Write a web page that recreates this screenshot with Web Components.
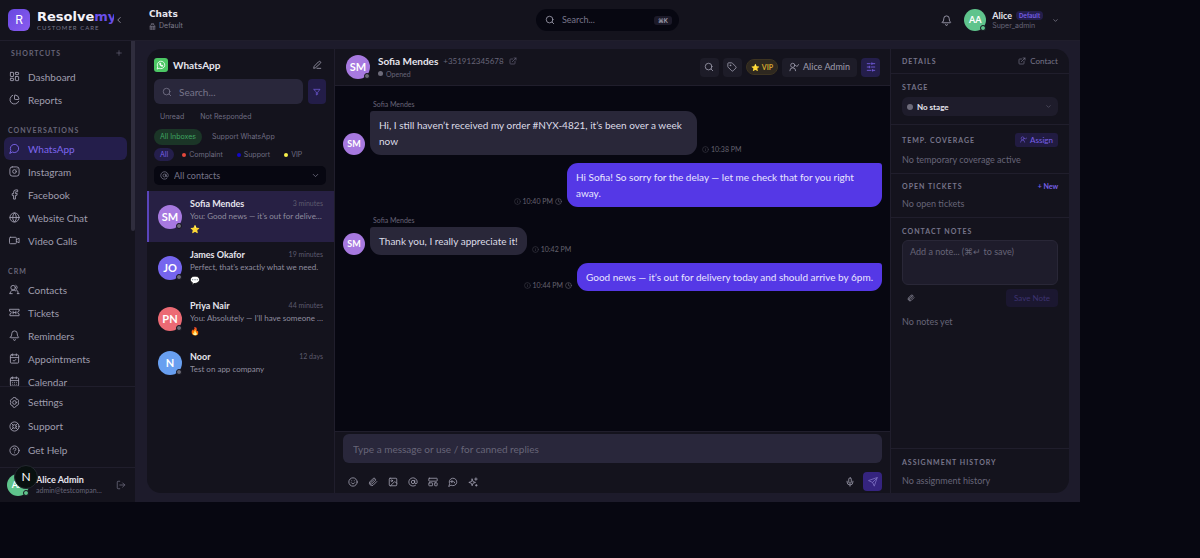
<!DOCTYPE html>
<html lang="en">
<head>
<meta charset="utf-8">
<title>Resolvemy – Chats</title>
<style>
  :root {
    --page: #070711;
    --panel: #14131d;
    --canvas: #1d1b2b;
    --raised: #29273b;
    --line: #201e2c;
    --text: #e6e5ee;
    --soft: #9f9dae;
    --mute: #676578;
    --accent: #5538e6;
    --violet: #7860e8;
    --tint: #241e4b;
  }
  body { margin: 0; background: var(--page); color: var(--text); font: 9px/12px Lato, "Liberation Sans", sans-serif; }
</style>
</head>
<body>
<resolve-app></resolve-app>

<script>
const RESET = `<style>
  :host { display: block; box-sizing: border-box; }
  :host([hidden]) { display: none; }
  *, *::before, *::after { box-sizing: border-box; }
  button, input, select, textarea { font: inherit; color: inherit; margin: 0; padding: 0; border: 0; background: none; outline: 0; appearance: none; }
  button { cursor: pointer; display: inline-flex; align-items: center; justify-content: center; white-space: nowrap; }
  a { color: inherit; text-decoration: none; }
  h1, h2, h3, p, ul { margin: 0; padding: 0; font-weight: inherit; font-size: inherit; list-style: none; }
  ::placeholder { color: var(--mute); opacity: 1; }
</style>`;

function define(name, render) {
  customElements.define(name, class extends HTMLElement {
    connectedCallback() {
      if (this.shadowRoot) return;
      const t = document.createElement('template');
      t.innerHTML = RESET + render(k => this.getAttribute(k) ?? '', k => this.hasAttribute(k));
      this.attachShadow({ mode: 'open' }).append(t.content.cloneNode(true));
    }
  });
}

const ICONS = {
  grid: '<rect x="3" y="3" width="7" height="9" rx="1"/><rect x="14" y="3" width="7" height="5" rx="1"/><rect x="14" y="12" width="7" height="9" rx="1"/><rect x="3" y="16" width="7" height="5" rx="1"/>',
  pie: '<path d="M21 12c.6 0 1-.4 1-1A10 10 0 0 0 13 2c-.6 0-1 .4-1 1v8a1 1 0 0 0 1 1z"/><path d="M21.2 15.9A10 10 0 1 1 8 2.8"/>',
  chat: '<path d="M7.9 20A9 9 0 1 0 4 16.1L2 22Z"/>',
  instagram: '<rect x="2" y="2" width="20" height="20" rx="5"/><circle cx="12" cy="12" r="4"/><path d="M17.500 6.500h.01"/>',
  facebook: '<path d="M18 2h-3a5 5 0 0 0-5 5v3H7v4h3v8h4v-8h3l1-4h-4V7a1 1 0 0 1 1-1h3z"/>',
  globe: '<circle cx="12" cy="12" r="10"/><path d="M12 2a14 14 0 0 0 0 20 14 14 0 0 0 0-20M2 12h20"/>',
  video: '<rect x="1" y="5" width="15" height="14" rx="2"/><path d="m16 10 6-3v10l-6-3"/>',
  users: '<path d="M2 21a8 8 0 0 1 13-6M20 21a8 8 0 0 0-5-9 5 5 0 0 0 0-9"/><circle cx="9" cy="8" r="5"/><path d="M2 21h5M22 21h-4"/>',
  ticket: '<path d="M2 9a3 3 0 0 1 0 6v4h20v-4a3 3 0 0 1 0-6V5H2zM9 9v6M15 9v6M9 12h6"/>',
  bell: '<path d="M10 21a2 2 0 0 0 4 0"/><path d="M3.300 15.300A1 1 0 0 0 4 17h16a1 1 0 0 0 .7-1.700C19.400 14 18 12.500 18 8A6 6 0 0 0 6 8c0 4.500-1.400 6-2.700 7.300z"/>',
  calcheck: '<rect x="3" y="4" width="18" height="18" rx="2"/><path d="M8 2v4M16 2v4M3 10h18M9 16l2 2 4-4"/>',
  calendar: '<rect x="3" y="4" width="18" height="18" rx="2"/><path d="M8 2v4M16 2v4M3 10h18M8 14h.01M12 14h.01M16 14h.01M8 18h.01M12 18h.01M16 18h.01"/>',
  gear: '<path d="m12 1 3 1 1 3 3 0 2 3-1 3 1 4-2 3-3 1-2 3-2 1-3-1-1-3-3-1-2-3 1-3-1-4 2-3 3-1 1-2z"/><circle cx="12" cy="12" r="4"/>',
  buoy: '<circle cx="12" cy="12" r="10"/><circle cx="12" cy="12" r="4"/><path d="m5 5 4 4M15 9l4-4M15 15l4 4M9 15l-4 4"/>',
  help: '<circle cx="12" cy="12" r="10"/><path d="M9 9a3 3 0 0 1 6 1c0 2-3 3-3 3M12 17h.01"/>',
  logout: '<path d="M9 21H5a2 2 0 0 1-2-2V5a2 2 0 0 1 2-2h4M16 17l5-5-5-5M21 12H9"/>',
  left: '<path d="m15 18-6-6 6-6"/>',
  down: '<path d="m6 9 6 6 6-6"/>',
  plus: '<path d="M5 12h14M12 5v14"/>',
  building: '<path d="M4 22V9l4-3h8l4 3v13zM8 6V2h8v4M4 12h16M4 17h16M9 12v10M15 12v10"/>',
  search: '<circle cx="11" cy="11" r="8"/><path d="m21 21-4-4"/>',
  pen: '<path d="M12 20h9M16 4a2 2 0 0 1 4 4L8 19l-4 1 1-4z"/>',
  filter: '<path d="M3 4h18l-7 9v6l-4 2v-8z"/>',
  at: '<circle cx="12" cy="12" r="4"/><path d="M16 8v5a3 3 0 0 0 6 0v-1a10 10 0 1 0-4 8"/>',
  external: '<path d="M15 3h6v6M10 14 21 3M18 13v6a2 2 0 0 1-2 2H5a2 2 0 0 1-2-2V8a2 2 0 0 1 2-2h6"/>',
  tag: '<path d="M12.600 2.600A2 2 0 0 0 11 2H4a2 2 0 0 0-2 2v7a2 2 0 0 0 .6 1.400l8.700 8.700a2.400 2.400 0 0 0 3.400 0l6.600-6.600a2.400 2.400 0 0 0 0-3.400z"/><circle cx="8" cy="8" r="1"/>',
  usercheck: '<path d="M2 21a7 7 0 0 1 14 0M16 8l3 3 4-5"/><circle cx="9" cy="8" r="5"/>',
  sliders: '<path d="M21 4h-7M10 4H3M21 12h-9M8 12H3M21 20h-5M12 20H3M14 2v4M8 10v4M16 18v4"/>',
  smile: '<circle cx="12" cy="12" r="10"/><path d="M8 14s1 2 4 2 4-2 4-2M9 9h.01M15 9h.01"/>',
  clip: '<path d="m21 11-9 9a6 6 0 0 1-8-8l9-9a4 4 0 0 1 5 5l-9 9a2 2 0 0 1-3-3l9-8"/>',
  image: '<rect x="3" y="3" width="18" height="18" rx="2"/><circle cx="9" cy="9" r="2"/><path d="m21 15-3-3a2 2 0 0 0-3 0l-9 9"/>',
  template: '<rect x="2" y="3" width="20" height="7" rx="1"/><rect x="2" y="14" width="9" height="7" rx="1"/><rect x="16" y="14" width="6" height="7" rx="1"/>',
  reply: '<path d="M7.900 20A9 9 0 1 0 4 16.100L2 22Z"/><path d="m10 8-3 3 3 3M7 11h6a3 3 0 0 1 3 3"/>',
  sparkle: '<path d="M10 5 12 11l6 2-6 2-2 6-2-6-6-2 6-2zM19 2v6M16 5h6M20 18v4M18 20h4"/>',
  mic: '<rect x="9" y="2" width="6" height="13" rx="3"/><path d="M5 10v2a7 7 0 0 0 14 0v-2M12 19v3"/>',
  send: '<path d="M22 2 15 22l-4-9-9-4zM22 2 11 13"/>',
  info: '<circle cx="12" cy="12" r="10"/><path d="M12 16v-4M12 8h.01"/>',
  clock: '<circle cx="12" cy="12" r="10"/><path d="M12 6v6l4 2"/>',
  phone: '<path d="M3 21l1-5a9 9 0 1 1 4 4z"/><path d="M9 8c-1 4 3 8 7 7v-2l-2-1-1 1-2-2 1-1-1-2z" fill="currentColor"/>',
};

define('ui-icon', a => `<style>
  :host { display: inline-block; flex: none; width: var(--size, 10px); height: var(--size, 10px); }
  svg { display: block; width: 100%; height: 100%; }
</style>
<svg viewBox="0 0 24 24" fill="none" stroke="currentColor" stroke-width="2" stroke-linecap="round" stroke-linejoin="round" aria-hidden="true">${ICONS[a('name')]}</svg>`);

define('ui-avatar', (a, has) => `<style>
  :host { position: relative; flex: none; width: var(--size, 24px); height: var(--size, 24px); border-radius: 50%; background: ${a('color')};
    color: #fff; font-size: 11px; font-weight: 700; display: grid; place-items: center; }
  :host([small]) { --size: 22px; font-size: 9px; }
  i { position: absolute; right: 0; bottom: 0; width: 6px; height: 6px; border-radius: 50%; border: 1px solid var(--panel); background: ${a('dot') || '#6b6a76'}; }
</style><span><slot></slot></span>${has('dot') ? '<i></i>' : ''}`);

define('nav-item', (a, has) => `<style>
  a { display: flex; align-items: center; gap: 8px; height: var(--row, 23px); margin: 0 4px; padding: 0 5px; border-radius: 6px; color: var(--soft); font-size: 10px; --size: 11px; }
  :host([active]) a { background: var(--tint); color: #7d66ee; }
</style><a href="#" ${has('active') ? 'aria-current="page"' : ''}><ui-icon name="${a('icon')}"></ui-icon><slot></slot></a>`);

define('nav-group', (a, has) => `<style>
  :host { padding-top: 13px; }
  header { display: flex; align-items: center; justify-content: space-between; padding: 0 8px; margin-bottom: 1px; color: var(--mute); }
  h2 { font-size: 7px; font-weight: 700; line-height: 12px; letter-spacing: 1px; text-transform: uppercase; }
  :host([addable]) { padding-top: 6px; }
  :host([addable]) header { margin-bottom: 6px; padding-left: 11px; }
  button { --size: 8px; }
</style><header><h2>${a('label')}</h2>${has('addable') ? '<button aria-label="Add shortcut"><ui-icon name="plus"></ui-icon></button>' : ''}</header>
<nav aria-label="${a('label')}"><slot></slot></nav>`);

define('app-sidebar', () => `<style>
  :host { display: flex; flex-direction: column; background: var(--panel); min-height: 0; position: relative; }
  .brand { display: flex; align-items: center; gap: 7px; height: 41px; padding: 0 11px 0 8px; border-bottom: 1px solid var(--line); }
  .logo { flex: none; display: grid; place-items: center; width: 22px; height: 22px; border-radius: 6px; background: linear-gradient(135deg, #6748e0, #8a5cf0); color: #fff; font: 12px/22px Inter, sans-serif; }
  .words { flex: 1; min-width: 0; overflow: hidden; }
  .name { font: bold 13px/14px "DejaVu Sans", sans-serif; color: #f4f3fa; white-space: nowrap; overflow: hidden; }
  .name span { color: #6a4fe8; }
  .sub { font-size: 6px; line-height: 7px; letter-spacing: 1px; color: #77758a; white-space: nowrap; }
  .brand button { margin-left: -7px; color: var(--soft); }
  .scroll { flex: 1; min-height: 0; overflow: hidden; border-right: 4px solid transparent; }
  .thumb { position: absolute; right: 0; top: 41px; width: 4px; height: 190px; border-radius: 0 0 2px 2px; background: #2f2d3d; }
  .foot { --row: 24px; padding: 3px 0 5px; border-top: 1px solid var(--line); }
  .me { display: flex; align-items: center; gap: 7px; height: 35px; padding: 0 9px 0 7px; border-top: 1px solid var(--line); color: var(--mute); }
  .me p { overflow: hidden; text-overflow: ellipsis; white-space: nowrap; line-height: 11px; font-size: 7px; }
  .me .who { font-size: 9px; font-weight: 700; color: var(--text); }
  .me div { flex: 1; min-width: 0; }
  .me button { margin-left: 6px; }
  .badge { position: absolute; left: 14px; bottom: 13px; width: 24px; height: 24px; border-radius: 50%; background: #08100f; border: 1px solid #242830; color: #fff; font-size: 12px; z-index: 1; }
</style>
<div class="brand"><div class="logo">R</div>
  <div class="words"><p class="name">Resolve<span>my</span></p><p class="sub">CUSTOMER CARE</p></div>
  <button aria-label="Collapse sidebar"><ui-icon name="left"></ui-icon></button></div>
<div class="scroll">
  <nav-group label="Shortcuts" addable><nav-item icon="grid">Dashboard</nav-item><nav-item icon="pie">Reports</nav-item></nav-group>
  <nav-group label="Conversations"><nav-item icon="chat" active>WhatsApp</nav-item><nav-item icon="instagram">Instagram</nav-item><nav-item icon="facebook">Facebook</nav-item><nav-item icon="globe">Website Chat</nav-item><nav-item icon="video">Video Calls</nav-item></nav-group>
  <nav-group label="CRM"><nav-item icon="users">Contacts</nav-item><nav-item icon="ticket">Tickets</nav-item><nav-item icon="bell">Reminders</nav-item><nav-item icon="calcheck">Appointments</nav-item><nav-item icon="calendar">Calendar</nav-item></nav-group>
</div>
<div class="thumb"></div>
<div class="foot"><nav-item icon="gear">Settings</nav-item><nav-item icon="buoy">Support</nav-item><nav-item icon="help">Get Help</nav-item></div>
<div class="me"><ui-avatar small color="#5fc48c" dot="#5fc48c">AA</ui-avatar>
  <div><p class="who">Alice Admin</p><p>admin@testcompany.com</p></div>
  <button aria-label="Log out"><ui-icon name="logout"></ui-icon></button></div>
<button class="badge" aria-label="Developer tools">N</button>`);

define('top-bar', () => `<style>
  :host { display: grid; grid-template-columns: 1fr 143px 1fr; align-items: center; height: 41px; padding: 0 14px; background: var(--panel); border-bottom: 1px solid var(--line); }
  h1 { font: bold 9px/12px "DejaVu Sans", sans-serif; }
  .org { display: flex; align-items: center; gap: 3px; font: 7px/12px Inter, sans-serif; --size: 7px; color: #7d7b8c; }
  .search { display: flex; align-items: center; gap: 7px; height: 22px; padding: 0 7px 0 9px; border-radius: 11px; background: var(--page); color: var(--soft); }
  .search input { flex: 1; min-width: 0; }
  .search ::placeholder { color: #77758a; }
  kbd { font: 600 6px/9px Inter, sans-serif; padding: 0 4px; border-radius: 3px; background: #1c1a29; }
  .right { display: flex; align-items: center; justify-content: flex-end; margin-right: 7px; color: var(--soft); }
  .bell { margin-right: 12px; --size: 11px; }
  .who { margin: 0 9px 0 6px; font: 7px/9px Inter, sans-serif; color: var(--mute); }
  .who b { font: 700 9px/11px Lato, sans-serif; color: var(--text); margin-right: 4px; }
  .who div { display: flex; align-items: center; }
  .pill { padding: 0 3px; border-radius: 4px; font-size: 6px; line-height: 9px; font-weight: 600; background: var(--tint); color: var(--violet); }
  .menu { --size: 7px; }
</style>
<div><h1>Chats</h1><p class="org"><ui-icon name="building"></ui-icon>Default</p></div>
<label class="search"><ui-icon name="search"></ui-icon><input type="text" placeholder="Search..." aria-label="Search everything"><kbd>⌘K</kbd></label>
<div class="right"><button class="bell" aria-label="Notifications"><ui-icon name="bell"></ui-icon></button>
  <ui-avatar small color="#5fc48c" dot="#5fc48c">AA</ui-avatar>
  <div class="who"><div><b>Alice</b><span class="pill">Default</span></div><p>Super_admin</p></div>
  <button class="menu" aria-label="Account menu"><ui-icon name="down"></ui-icon></button></div>`);

define('filter-chip', a => `<style>
  :host { display: inline-block; }
  button { height: var(--h, 14px); padding: 0 6px; border-radius: 8px; font: 7px/12px Inter, sans-serif; color: #6f6d82; gap: 3px; }
  :host([tone=green]) button { background: #1b3527; color: #3fa661; }
  :host([tone=violet]) button { background: var(--tint); color: var(--violet); }
  i { width: 4px; height: 4px; border-radius: 50%; background: ${a('dot')}; }
</style><button>${a('dot') ? '<i></i>' : ''}<slot></slot></button>`);

define('conversation-item', a => `<style>
  :host { border-left: 2px solid transparent; }
  :host([active]) { background: #272044; border-left-color: #5a45bb; }
  a { display: flex; align-items: center; gap: 8px; padding: 6px 11px 6px 9px; }
  div { flex: 1; min-width: 0; }
  header { display: flex; justify-content: space-between; align-items: center; font-size: 7px; color: #5d5b6e; line-height: 13px; }
  h3 { font-size: 9px; font-weight: 700; color: var(--text); }
  p { font-size: 8px; line-height: 13px; color: #8f8d9f; overflow: hidden; text-overflow: ellipsis; white-space: nowrap; }
  .mark { font-size: 8px; }
</style><a href="#"><ui-avatar color="${a('color')}" dot="#6b6a76">${a('initials')}</ui-avatar>
<div><header><h3>${a('name')}</h3><span>${a('when')}</span></header><p><slot></slot></p>${a('mark') ? `<p class="mark">${a('mark')}</p>` : ''}</div></a>`);

define('conversation-list', () => `<style>
  :host { background: var(--panel); border-right: 1px solid var(--line); }
  .top { padding: 9px 8px 6px 7px; }
  .title { display: flex; align-items: center; gap: 5px; height: 14px; margin-bottom: 7px; }
  .wa { display: grid; place-items: center; width: 14px; height: 14px; border-radius: 3px; background: #4cc764; color: #fff; }
  h2 { flex: 1; font-size: 10px; font-weight: 700; }
  .title button { color: var(--soft); margin-right: 4px; }
  .find { display: flex; gap: 5px; margin-bottom: 6px; }
  .find label { flex: 1; min-width: 0; display: flex; align-items: center; gap: 7px; height: 25px; padding: 0 8px; border-radius: 6px; background: var(--raised); font-size: 10px; color: #77758a; }
  input { flex: 1; min-width: 0; }
  .find ::placeholder { color: #77758a; }
  .find button { flex: none; width: 18px; height: 25px; border-radius: 4px; background: #231d48; color: var(--violet); --size: 8px; }
  .chips { display: flex; gap: 4px; }
  .b { margin: 5px 0 3px; --h: 16px; }
  .a { --h: 13px; }
  .labels { gap: 2px; }
  .drop { display: flex; align-items: center; gap: 5px; height: 19px; margin-top: 5px; padding: 0 6px; border-radius: 5px; background: var(--page); color: #77758a; --size: 9px; }
  select { flex: 1; font-size: 9px; }
</style>
<div class="top">
  <div class="title"><span class="wa"><ui-icon name="phone"></ui-icon></span><h2>WhatsApp</h2><button aria-label="New chat"><ui-icon name="pen"></ui-icon></button></div>
  <div class="find"><label><ui-icon name="search"></ui-icon><input type="text" placeholder="Search..." aria-label="Search chats"></label><button aria-label="Filter"><ui-icon name="filter"></ui-icon></button></div>
  <div class="chips a"><filter-chip>Unread</filter-chip><filter-chip>Not Responded</filter-chip></div>
  <div class="chips b"><filter-chip tone="green">All Inboxes</filter-chip><filter-chip>Support WhatsApp</filter-chip></div>
  <div class="chips a labels"><filter-chip tone="violet">All</filter-chip><filter-chip dot="#e5483c">Complaint</filter-chip><filter-chip dot="#1208c8">Support</filter-chip><filter-chip dot="#f6f04a">VIP</filter-chip></div>
  <label class="drop"><ui-icon name="at"></ui-icon><select aria-label="Contacts"><option>All contacts</option></select><ui-icon name="down"></ui-icon></label>
</div>
<conversation-item active color="#a779e0" initials="SM" name="Sofia Mendes" when="3 minutes" mark="⭐">You: Good news — it’s out for delivery today</conversation-item>
<conversation-item color="#7565ee" initials="JO" name="James Okafor" when="19 minutes" mark="💬">Perfect, that’s exactly what we need.</conversation-item>
<conversation-item color="#ec6a74" initials="PN" name="Priya Nair" when="44 minutes" mark="🔥">You: Absolutely — I’ll have someone call</conversation-item>
<conversation-item color="#689ff0" initials="N" name="Noor" when="12 days">Test on app company</conversation-item>`);

define('chat-message', (a, has) => `<style>
  :host { display: flex; align-items: flex-end; gap: 5px; margin-top: 8px; }
  :host([out]) { flex-direction: row-reverse; }
  .col { min-width: 0; }
  .from { font-size: 7px; line-height: 10px; color: var(--mute); padding: 0 3px 2px; }
  .bubble { max-width: 327px; padding: 6px 9px; border-radius: 3px 11px 11px 11px; background: #292739; color: #dddce8; font-size: 10px; line-height: 16px; }
  :host([out]) .bubble { border-radius: 11px 3px 11px 11px; background: var(--accent); color: #e9e6ff; }
  .bubble.out { max-width: 315px; }
  .time { display: flex; align-items: center; gap: 2px; font-size: 7px; color: #64626f; white-space: nowrap; --size: 7px; }
  .time ui-icon:first-child { opacity: .6; }
</style>
${has('out') ? '' : '<ui-avatar small color="#a779e0">SM</ui-avatar>'}
<div class="col">${a('from') ? `<p class="from">${a('from')}</p>` : ''}<p class="bubble ${has('out') ? 'out' : ''}"><slot></slot></p></div>
<span class="time"><ui-icon name="info"></ui-icon>${a('time')}${has('out') ? '<ui-icon name="clock"></ui-icon>' : ''}</span>`);

define('chat-view', () => `<style>
  :host { display: flex; flex-direction: column; min-width: 0; background: var(--page); }
  .head { display: flex; align-items: center; gap: 8px; height: 37px; padding: 0 10px 0 11px; background: var(--panel); border-bottom: 1px solid var(--line); }
  .who { flex: 1; }
  .who div { display: flex; align-items: center; gap: 5px; font-size: 8px; color: var(--mute); --size: 8px; }
  h2 { font-size: 10px; font-weight: 700; line-height: 13px; color: var(--text); }
  .who p { display: flex; align-items: center; gap: 3px; font-size: 7px; color: var(--mute); }
  .who i { width: 5px; height: 5px; border-radius: 50%; background: #6d6b7a; }
  .tools { display: flex; align-items: center; gap: 4px; }
  .tools button { min-width: 19px; height: 19px; border-radius: 4px; background: #1d1c28; color: var(--soft); }
  .tools .vip { height: 16px; padding: 0 4px; gap: 2px; border-radius: 8px; background: #2e2820; border: 1px solid #3c3321; color: #d3a52f; font-size: 7px; font-weight: 700; }
  .tools .owner { padding: 0 7px; gap: 4px; font-size: 9px; }
  .tools .on { background: var(--tint); color: var(--violet); }
  .log { flex: 1; min-height: 0; padding: 5px 8px; overflow: hidden; }
  .compose { background: var(--panel); border-top: 1px solid var(--line); padding: 2px 8px; }
  .compose input { display: block; width: 100%; height: 29px; padding: 0 10px; border-radius: 6px; background: var(--raised); font-size: 10px; }
  .bar { display: flex; align-items: center; gap: 10px; padding: 9px 0 0 5px; color: var(--soft); }
  .mic { margin-left: auto; margin-right: -2px; }
  .send { width: 19px; height: 19px; border-radius: 4px; background: #35247f; color: #7c6fc0; }
</style>
<div class="head"><ui-avatar color="#a779e0" dot="#6b6a76">SM</ui-avatar>
  <div class="who"><div><h2>Sofia Mendes</h2><span>+351912345678</span><ui-icon name="external"></ui-icon></div><p><i></i>Opened</p></div>
  <div class="tools"><button aria-label="Search in chat"><ui-icon name="search"></ui-icon></button><button aria-label="Tags"><ui-icon name="tag"></ui-icon></button>
    <button class="vip"><span>⭐</span>VIP</button><button class="owner"><ui-icon name="usercheck"></ui-icon>Alice Admin</button><button class="on" aria-label="Toggle details"><ui-icon name="sliders"></ui-icon></button></div></div>
<div class="log">
  <chat-message from="Sofia Mendes" time="10:38 PM">Hi, I still haven’t received my order #NYX-4821, it’s been over a week now</chat-message>
  <chat-message out time="10:40 PM">Hi Sofia! So sorry for the delay — let me check that for you right away.</chat-message>
  <chat-message from="Sofia Mendes" time="10:42 PM">Thank you, I really appreciate it!</chat-message>
  <chat-message out time="10:44 PM">Good news — it’s out for delivery today and should arrive by 6pm.</chat-message>
</div>
<form class="compose"><input type="text" placeholder="Type a message or use / for canned replies" aria-label="Message">
  <div class="bar">${[['smile','Emoji'],['clip','Attach'],['image','Image'],['at','Mention'],['template','Templates'],['reply','Canned replies'],['sparkle','Assistant']].map(([i, l]) => `<button type="button" aria-label="${l}"><ui-icon name="${i}"></ui-icon></button>`).join('')}
  <button type="button" class="mic" aria-label="Record"><ui-icon name="mic"></ui-icon></button><button class="send" aria-label="Send"><ui-icon name="send"></ui-icon></button></div></form>`);

define('detail-section', a => `<style>
  :host { padding: 0 11px; border-bottom: 1px solid var(--line); }
  header { display: flex; align-items: center; justify-content: space-between; height: var(--head, 26px); }
  h3 { font-size: 7px; font-weight: 700; letter-spacing: 1px; text-transform: uppercase; color: #77758a; }
  ::slotted(p) { margin: 0; font-size: 9px; line-height: 12px; color: var(--mute); }
</style><header><h3>${a('label')}</h3><slot name="action"></slot></header><slot></slot>`);

define('details-panel', () => `<style>
  :host { display: flex; flex-direction: column; background: var(--panel); border-left: 1px solid var(--line); }
  .head { --head: 24px; }
  .contact { display: flex; gap: 4px; align-items: center; font-size: 8px; color: #77758a; --size: 8px; }
  .stage { display: flex; align-items: center; gap: 4px; height: 19px; margin: -3px 0 8px; padding: 0 6px 0 5px; border-radius: 6px; background: #1e1c2b; --size: 7px; color: var(--mute); }
  .stage i { width: 6px; height: 6px; border-radius: 50%; background: #6d6b7a; }
  select { flex: 1; font-size: 8px; font-weight: 700; color: var(--text); }
  .temp { --head: 29px; padding-bottom: 7px; }
  .tickets { --head: 24px; padding-bottom: 7px; }
  .assign { height: 14px; padding: 0 5px; gap: 3px; border-radius: 3px; background: #211b41; color: var(--violet); font-size: 8px; --size: 7px; }
  .new { font-size: 7px; font-weight: 700; color: var(--violet); }
  .notes { --head: 25px; flex: 1; }
  textarea { display: block; width: 100%; height: 45px; padding: 5px 7px; margin-top: -3px; border: 1px solid #292737; border-radius: 6px; background: #1e1c2b; resize: none; font-size: 9px; line-height: 12px; }
  .row { display: flex; align-items: center; justify-content: space-between; padding: 4px 0 9px 5px; color: var(--soft); --size: 8px; }
  .save { height: 18px; padding: 0 8px; border-radius: 4px; background: #1b1730; color: #3d3370; font-size: 8px; }
  .history { border: 0; padding-bottom: 6px; }
</style>
<detail-section class="head" label="Details"><a class="contact" slot="action" href="#"><ui-icon name="external"></ui-icon>Contact</a></detail-section>
<detail-section label="Stage"><label class="stage"><i></i><select aria-label="Stage"><option>No stage</option></select><ui-icon name="down"></ui-icon></label></detail-section>
<detail-section class="temp" label="Temp. coverage"><button class="assign" slot="action"><ui-icon name="usercheck"></ui-icon>Assign</button><p>No temporary coverage active</p></detail-section>
<detail-section class="tickets" label="Open tickets"><button class="new" slot="action">+ New</button><p>No open tickets</p></detail-section>
<detail-section class="notes" label="Contact notes"><textarea placeholder="Add a note... (⌘↵ to save)" aria-label="Contact note"></textarea>
  <div class="row"><button aria-label="Attach file"><ui-icon name="clip"></ui-icon></button><button class="save" disabled>Save Note</button></div><p>No notes yet</p></detail-section>
<detail-section class="history" label="Assignment history"><p>No assignment history</p></detail-section>`);

define('resolve-app', () => `<style>
  :host { display: grid; grid-template: auto minmax(0, 1fr) / 135px minmax(0, 1fr); width: 90%; height: 90vh; min-height: 500px; background: var(--canvas); }
  app-sidebar { grid-row: 1 / 3; }
  main { display: grid; grid-template-columns: 188px minmax(0, 1fr) 179px; margin: 8px 11px 9px 12px; border-radius: 14px; overflow: hidden; }
</style><app-sidebar></app-sidebar><top-bar></top-bar><main><conversation-list></conversation-list><chat-view></chat-view><details-panel></details-panel></main>`);
</script>
</body>
</html>
